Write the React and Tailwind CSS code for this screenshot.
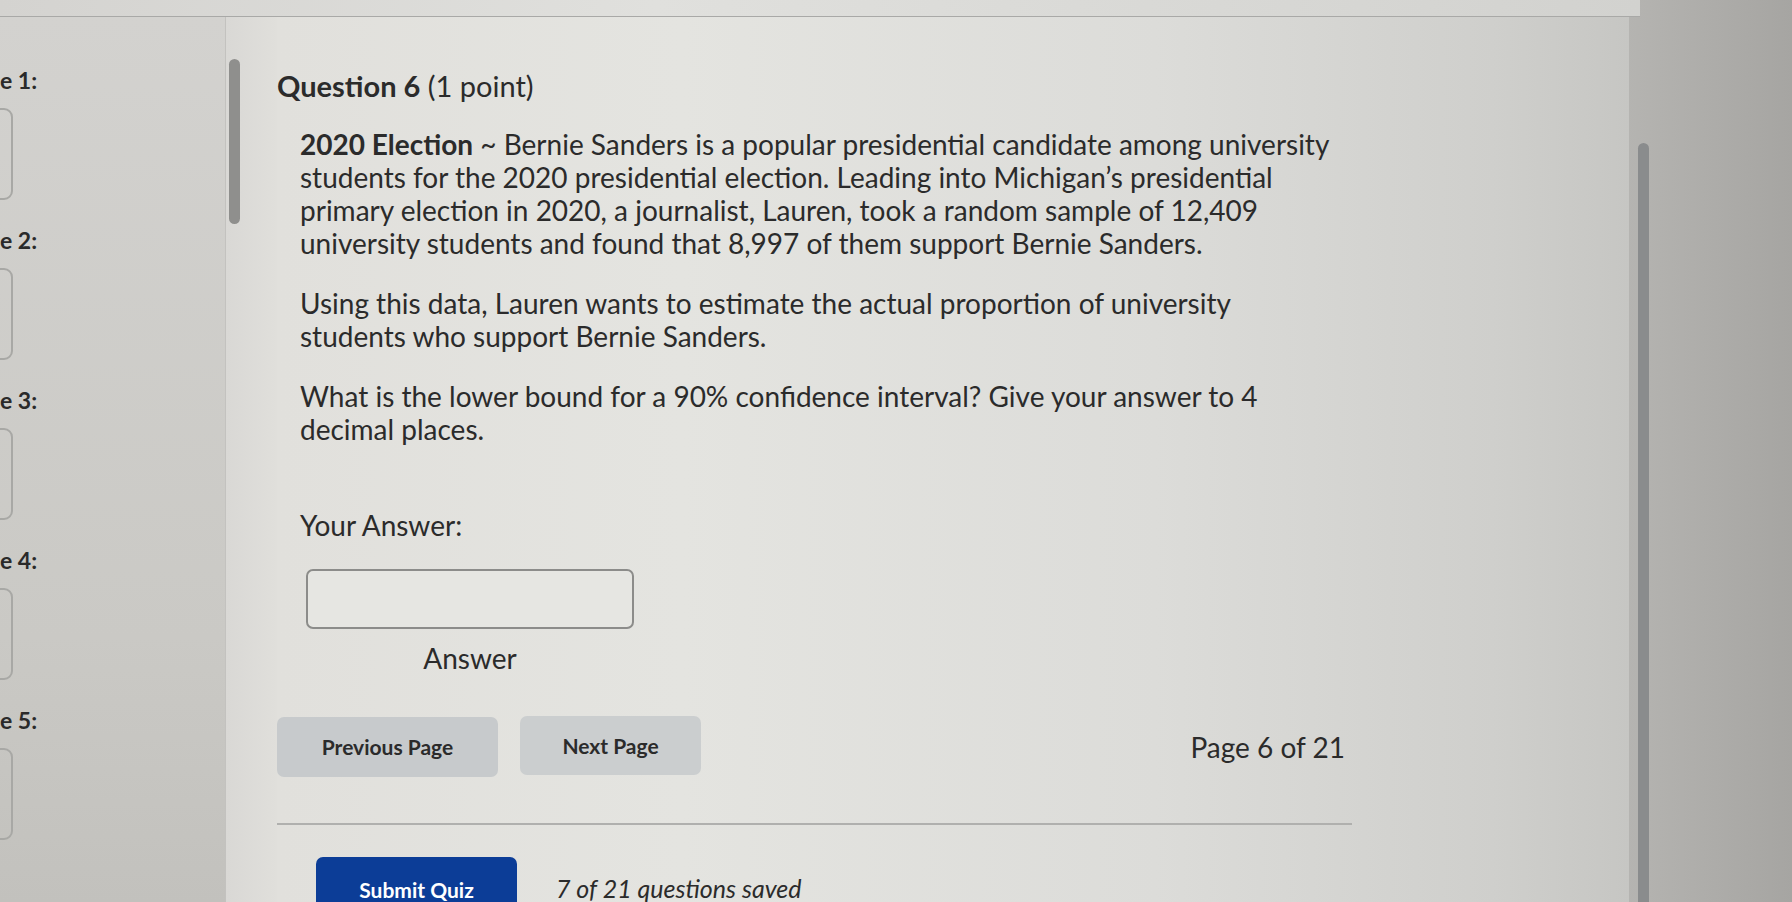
import React from "react";

const labels = ["e 1:", "e 2:", "e 3:", "e 4:", "e 5:"];

export default function App() {
  return (
    <div
      className="w-[1792px] h-[902px] overflow-hidden flex flex-col text-[#2b2b2b] bg-[linear-gradient(90deg,#cfceca_0%,#dcdbd7_30%,#d6d6d3_70%,#b3b2af_92%,#a6a5a2_100%)]"
      style={{ fontFamily: "Lato, 'Open Sans', sans-serif" }}
    >
      {/* top strip */}
      <div className="h-[17px] shrink-0 flex">
        <div className="w-[1640px] border-b border-[#a9a9a7] bg-[linear-gradient(90deg,#d4d3d0,#e0e0dd_40%,#d2d2cf)]" />
      </div>

      <div className="flex flex-1 min-h-0">
        {/* left sidebar */}
        <div className="w-[226px] shrink-0 border-r border-[#c3c2bf] bg-[linear-gradient(180deg,#d3d2cf,#cac9c5_70%,#c2c1bd)] flex flex-col pt-[50px] overflow-hidden">
          {labels.map((l, i) => (
            <div key={i} className="h-[160px] shrink-0 flex flex-col">
              <div className="text-[23px] leading-[26px] font-bold text-[#2a2a2a]">{l}</div>
              <div className="mt-[15px] ml-[-30px] w-[43px] h-[92px] shrink-0 rounded-[9px] border-2 border-[#a8a8a5]" />
            </div>
          ))}
        </div>

        {/* left scrollbar */}
        <div className="w-[51px] shrink-0 bg-[linear-gradient(90deg,#d9d8d5,#e0dfdb)]">
          <div className="ml-[3px] mt-[42px] w-[11px] h-[165px] rounded-full bg-[#8f8f8d]" />
        </div>

        {/* main panel */}
        <div className="w-[1352px] shrink-0 bg-[linear-gradient(90deg,#e1e0dc_0%,#e4e4e0_30%,#dcdcd9_65%,#cfcfcc_90%,#c6c6c3_100%)]">
          <div className="w-[1075px] pt-[54px]">
            <div className="text-[29px] leading-[30px] whitespace-nowrap">
              <span className="font-bold">Question 6</span> (1 point)
            </div>

            <div className="pl-[23px] mt-[27px] text-[28px] leading-[33px] whitespace-nowrap">
              <p>
                <span className="font-bold">2020 Election</span> ~ Bernie Sanders is a popular presidential candidate among university
                <br />
                students for the 2020 presidential election. Leading into Michigan’s presidential
                <br />
                primary election in 2020, a journalist, Lauren, took a random sample of 12,409
                <br />
                university students and found that 8,997 of them support Bernie Sanders.
              </p>
              <p className="mt-[27px]">
                Using this data, Lauren wants to estimate the actual proportion of university
                <br />
                students who support Bernie Sanders.
              </p>
              <p className="mt-[27px]">
                What is the lower bound for a 90% confidence interval? Give your answer to 4
                <br />
                decimal places.
              </p>
              <p className="mt-[63px]">Your Answer:</p>

              <div className="ml-[6px] mt-[27px] w-[328px] flex flex-col items-center">
                <div className="w-[328px] h-[60px] rounded-[7px] border-2 border-[#8c8c8a] bg-[#e6e6e2]" />
                <div className="mt-[13px] text-[28px] leading-[33px]">Answer</div>
              </div>
            </div>

            <div className="mt-[41px] flex items-center">
              <button className="w-[221px] h-[60px] rounded-[7px] bg-[#c7cacc] text-[21px] font-bold text-[#2b2b2b]">
                Previous Page
              </button>
              <button className="ml-[22px] mb-[2px] w-[181px] h-[59px] rounded-[7px] bg-[#cbcecf] text-[21px] font-bold text-[#2b2b2b]">
                Next Page
              </button>
              <div className="ml-auto mr-[7px] text-[28px] leading-[30px] whitespace-nowrap">Page 6 of 21</div>
            </div>

            <div className="mt-[46px] h-[2px] bg-[#b0b0ae]" />

            <div className="mt-[32px] flex items-start">
              <button className="ml-[39px] w-[201px] h-[62px] rounded-t-[7px] bg-[#0c3d97] text-white text-[21px] font-bold pt-[4px]">
                Submit Quiz
              </button>
              <div className="ml-[39px] mt-[16px] text-[25px] leading-[30px] italic whitespace-nowrap">7 of 21 questions saved</div>
            </div>
          </div>
        </div>

        {/* right scrollbar area */}
        <div className="flex-1">
          <div className="ml-[9px] mt-[126px] w-[11px] h-[900px] rounded-full bg-[#8a8c8d]" />
        </div>
      </div>
    </div>
  );
}
